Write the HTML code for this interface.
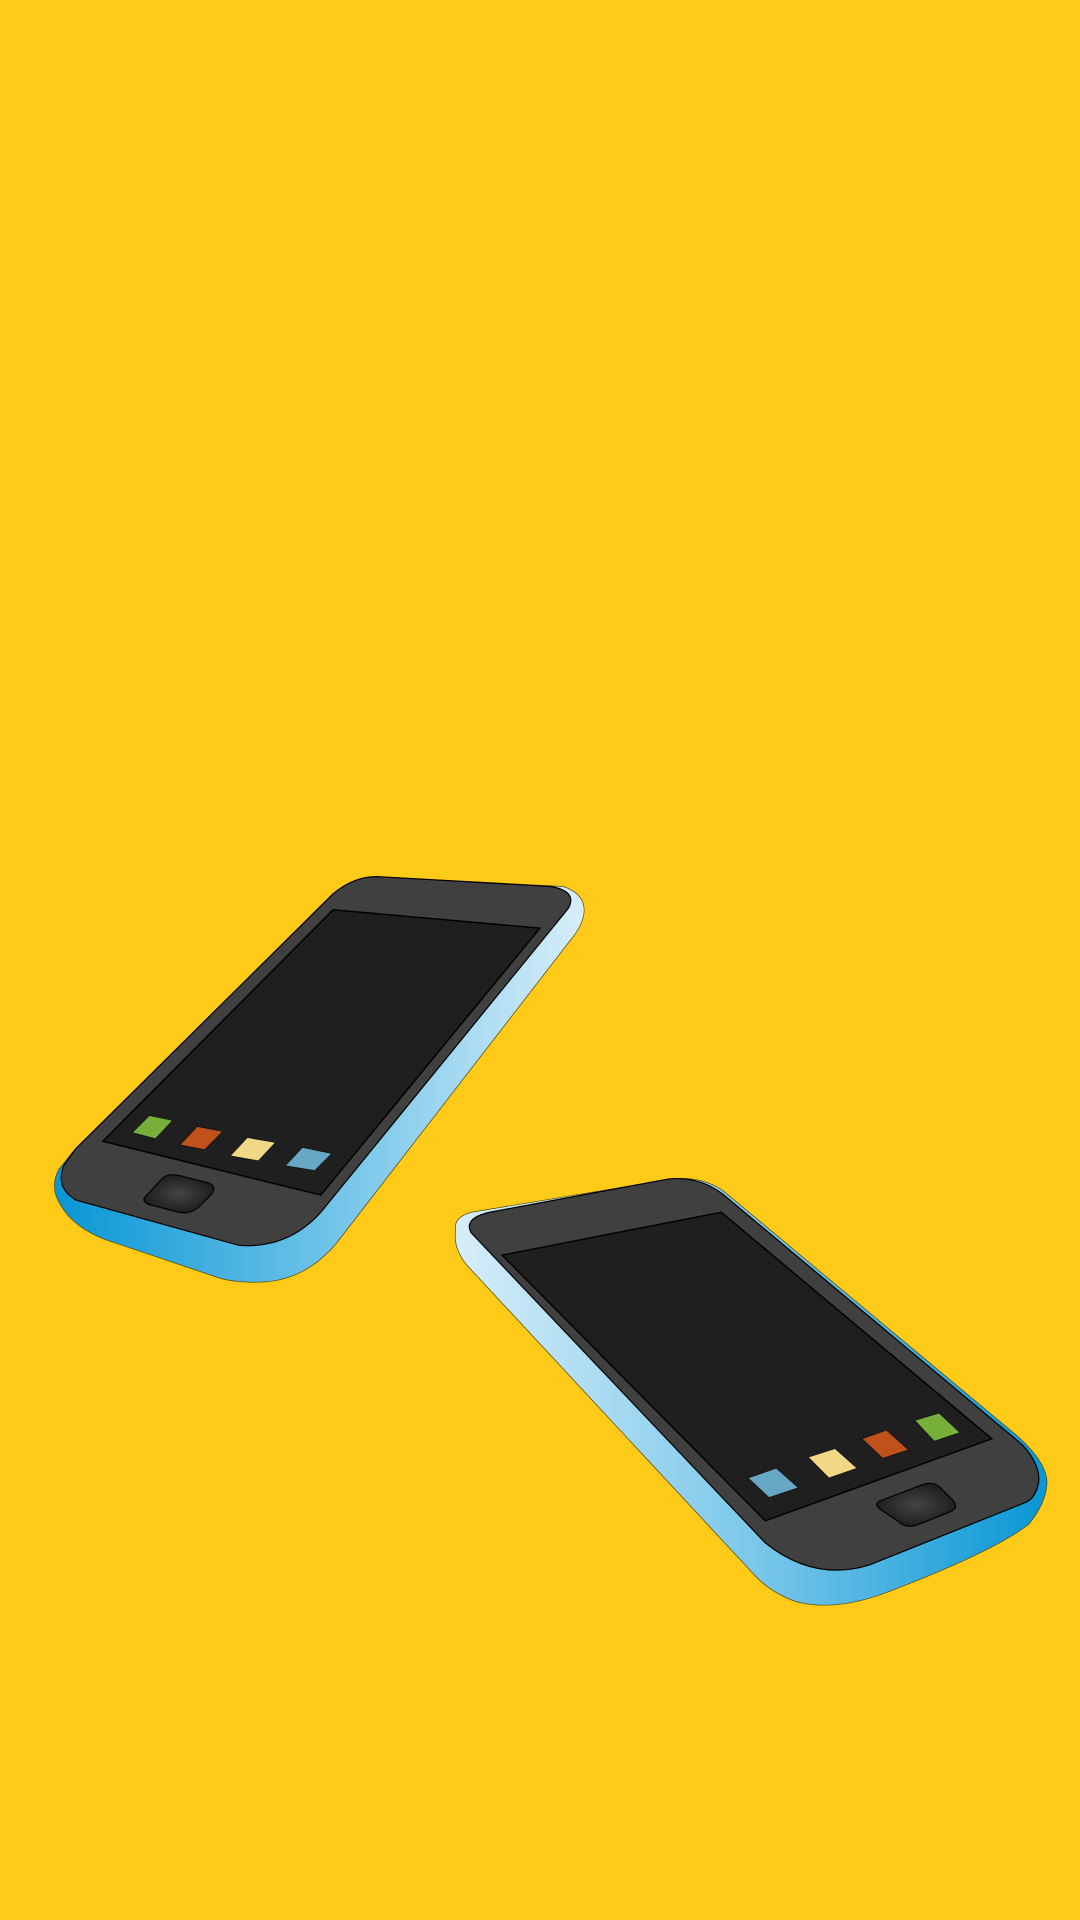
<!DOCTYPE html>
<html><head><meta charset="utf-8"><style>
html,body{margin:0;padding:0;background:#ffca18;}
svg{display:block;}
</style></head><body>
<svg width="1080" height="1920" viewBox="0 0 882 1568" xmlns="http://www.w3.org/2000/svg">
<defs>
<linearGradient id="g1" x1="45" y1="0" x2="478" y2="0" gradientUnits="userSpaceOnUse">
<stop offset="0" stop-color="#0896d4"/><stop offset="0.5" stop-color="#6cc2e8"/><stop offset="1" stop-color="#d8eef9"/></linearGradient>
<linearGradient id="g2" x1="370" y1="0" x2="856" y2="0" gradientUnits="userSpaceOnUse">
<stop offset="0" stop-color="#d8eef9"/><stop offset="0.5" stop-color="#7cc8ea"/><stop offset="1" stop-color="#0896d4"/></linearGradient>
<radialGradient id="hb"><stop offset="0" stop-color="#444"/><stop offset="1" stop-color="#1e1e1e"/></radialGradient>
</defs>
<rect width="882" height="1568" fill="#ffca18"/>
<!-- phone 1 -->
<path d="M60,940 L275,728 Q290,716 310,716 L460,724 Q478,730 477,745 Q476,755 468,765 L275,1015 Q250,1045 215,1047 Q195,1048 180,1044 L85,1012 Q60,1002 50,985 Q40,970 48,955 Z" fill="url(#g1)" stroke="#5a4a10" stroke-width="0.6"/>
<path d="M62,938 L272,730 Q290,715 310,716 L450,724 Q472,728 464,742 L262,990 Q235,1020 195,1017 L62,980 Q45,970 52,952 Z" fill="#404040" stroke="#000" stroke-width="1"/>
<polygon points="84,932 272,743 441,758 262,976" fill="#1f1f1f" stroke="#000" stroke-width="1.2"/>
<g stroke="#111" stroke-width="0.6" stroke-linejoin="round">
<polygon points="108,925 122,911 141,915 127,930" fill="#76b03a"/>
<polygon points="147,935 161,920 182,924 167,939" fill="#bf521b"/>
<polygon points="188,944 202,929 225,933 211,948" fill="#f0d886"/>
<polygon points="233,952 247,937 271,942 257,956" fill="#66a8c4"/>
</g>
<path d="M120,976 L133,962 Q138,958 146,960 L170,966 Q178,969 172,976 L163,985 Q156,992 146,990 L123,984 Q114,981 120,976 Z" fill="url(#hb)" stroke="#000" stroke-width="1"/>
<!-- phone 2 -->
<path d="M372,1005 Q370,994 385,990 L548,963 Q572,960 590,972 L830,1172 Q856,1195 855,1212 Q854,1228 840,1245 Q810,1268 720,1302 Q680,1316 650,1308 Q628,1300 615,1285 L382,1034 Q370,1020 372,1005 Z" fill="url(#g2)" stroke="#5a4a10" stroke-width="0.6"/>
<path d="M385,1007 Q378,995 400,990 L545,963 Q570,960 590,975 L835,1180 Q855,1202 845,1220 Q842,1226 835,1228 L710,1278 Q665,1292 625,1260 Z" fill="#404040" stroke="#000" stroke-width="1"/>
<polygon points="410,1025 589,990 810,1175 625,1242" fill="#1f1f1f" stroke="#000" stroke-width="1.2"/>
<g stroke="#111" stroke-width="0.6" stroke-linejoin="round">
<polygon points="611,1207 634,1199 652,1215 628,1223" fill="#66a8c4"/>
<polygon points="660,1190 682,1183 700,1199 677,1207" fill="#f0d886"/>
<polygon points="704,1175 724,1168 742,1184 721,1191" fill="#bf521b"/>
<polygon points="747,1160 767,1154 784,1170 763,1177" fill="#76b03a"/>
</g>
<path d="M718,1226 L752,1213 Q762,1209 768,1215 L778,1225 Q784,1232 775,1235 L750,1245 Q740,1249 733,1242 L721,1234 Q713,1229 718,1226 Z" fill="url(#hb)" stroke="#000" stroke-width="1"/>
</svg>
</body></html>
